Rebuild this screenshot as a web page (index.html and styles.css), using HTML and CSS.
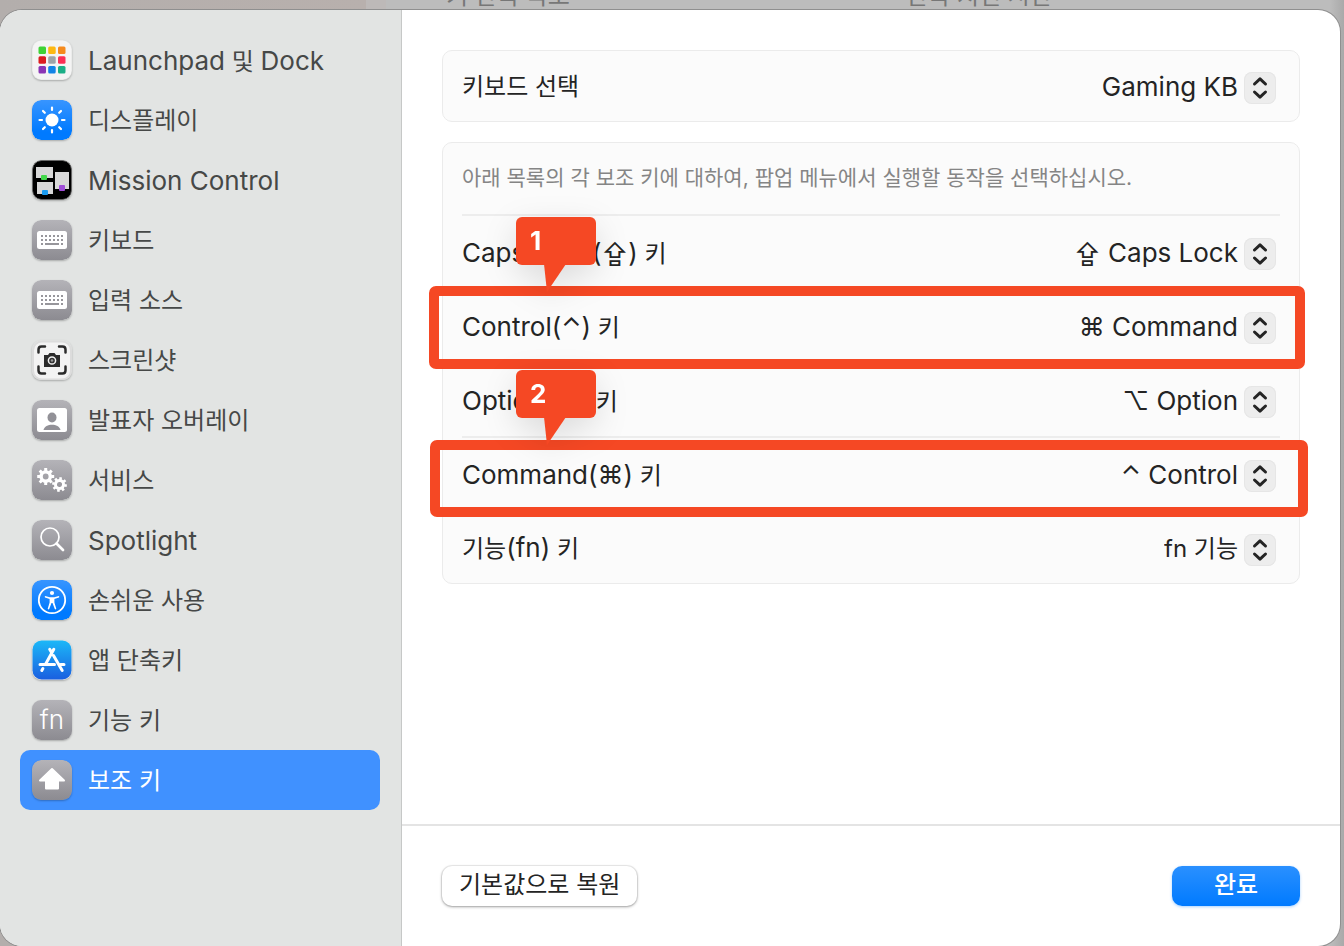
FILE: index.html
```html
<!DOCTYPE html>
<html lang="ko">
<head>
<meta charset="utf-8">
<title>보조 키</title>
<link rel="stylesheet" href="styles.css">
</head>
<body>
<svg class="defs" aria-hidden="true">
  <defs>
    <linearGradient id="gray" x1="0" y1="0" x2="0" y2="1"><stop offset="0" stop-color="#b4b3b8"/><stop offset="1" stop-color="#8c8b91"/></linearGradient>
    <linearGradient id="blue" x1="0" y1="0" x2="0" y2="1"><stop offset="0" stop-color="#3895ff"/><stop offset="0.8" stop-color="#007aff"/></linearGradient>
    <linearGradient id="store" x1="0" y1="0" x2="0" y2="1"><stop offset="0" stop-color="#1cb8f8"/><stop offset="1" stop-color="#1a5fe0"/></linearGradient>
    <g id="keys">
      <rect width="40" height="40" rx="9" fill="url(#gray)"/>
      <rect x="5" y="11" width="30" height="18" rx="2.5" fill="#fff"/>
      <g stroke="#97969b" stroke-width="2" fill="none">
        <path d="M9 16h22M9 20h22" stroke-dasharray="2 2"/>
        <path d="M9 24h2M13 24h14M29 24h2"/>
      </g>
    </g>
    <g id="gear">
      <circle r="4.6" fill="none" stroke="#fff" stroke-width="3.4"/>
      <g stroke="#fff" stroke-width="3"><path d="M0-8.500v3M0 5.500v3M-8.500 0h3M5.500 0h3M-6-6l2.100 2.100M3.900 3.900L6 6M-6 6l2.100-2.100M3.900-3.900L6-6"/></g>
    </g>
    <g id="updown">
      <path d="M10.500 12L16 6.800l5.500 5.200M10.500 20L16 25.200l5.500-5.200" fill="none" stroke="#242424" stroke-width="3" stroke-linecap="round" stroke-linejoin="round"/>
    </g>
  </defs>
</svg>
<div class="backdrop" aria-hidden="true"><span class="behind">키 반복 속도</span><span>반복 지연 시간</span></div>
<div class="dialog">
  <nav class="sidebar">
    <a class="item" href="#"><svg class="icon" viewBox="0 0 40 40"><rect x="0.500" y="0.500" width="39" height="39" rx="9" fill="#f4f4f4"/>
      <rect x="6.500" y="6.500" width="7.500" height="7.500" rx="1.500" fill="#3fd336"/><rect x="16.200" y="6.500" width="7.500" height="7.500" rx="1.500" fill="#fdb813"/><rect x="26" y="6.500" width="7.500" height="7.500" rx="1.500" fill="#f58a1d"/>
      <rect x="6.500" y="16.200" width="7.500" height="7.500" rx="1.500" fill="#dc1c1f"/><rect x="16.200" y="16.200" width="7.500" height="7.500" rx="1.500" fill="#9ea3a8"/><rect x="26" y="16.200" width="7.500" height="7.500" rx="1.500" fill="#fb2e55"/>
      <rect x="6.500" y="26" width="7.500" height="7.500" rx="1.500" fill="#8a35b5"/><rect x="16.200" y="26" width="7.500" height="7.500" rx="1.500" fill="#1384e6"/><rect x="26" y="26" width="7.500" height="7.500" rx="1.500" fill="#1aae86"/></svg><span class="name"><span class="latin">Launchpad</span> 및 <span class="latin">Dock</span></span></a>
    <a class="item" href="#"><svg class="icon" viewBox="0 0 40 40"><rect width="40" height="40" rx="9" fill="url(#blue)"/><circle cx="20" cy="20" r="6.500" fill="#fff"/><path d="M20 7.500v2.500M20 30v2.500M7.500 20H10M30 20h2.500M11 11l1.800 1.800M27.200 27.200L29 29M11 29l1.800-1.800M27.200 12.800L29 11" stroke="#fff" stroke-width="2.200" stroke-linecap="round"/></svg><span class="name">디스플레이</span></a>
    <a class="item" href="#"><svg class="icon" viewBox="0 0 40 40"><rect x="0.500" y="0.500" width="39" height="39" rx="9" fill="#000" stroke="#666"/>
      <rect x="4" y="7" width="17" height="11" fill="#d7d7d7"/><rect x="5" y="22" width="16" height="12" fill="#d7d7d7"/><rect x="23" y="12" width="14" height="17" fill="#d7d7d7"/>
      <rect x="9" y="15" width="6" height="5" rx="1" fill="#43d84b"/><rect x="10" y="30" width="6" height="5" rx="1" fill="#1b9cf2"/><rect x="27" y="25" width="6" height="6" rx="1" fill="#a04ed8"/></svg><span class="name latin">Mission Control</span></a>
    <a class="item" href="#"><svg class="icon" viewBox="0 0 40 40"><use href="#keys"/></svg><span class="name">키보드</span></a>
    <a class="item" href="#"><svg class="icon" viewBox="0 0 40 40"><use href="#keys"/></svg><span class="name">입력 소스</span></a>
    <a class="item" href="#"><svg class="icon" viewBox="0 0 40 40"><rect x="1" y="1.500" width="38" height="38" rx="9" fill="#f3f3f3" stroke="#dcdcdc" stroke-width="2"/>
      <path d="M6.500 12.500V9.500q0-3 3-3H13M27 6.500h3.500q3 0 3 3V12.500M33.500 26.500v4q0 3-3 3H27M13 33.500H9.500q-3 0-3-3V26.500" fill="none" stroke="#2b2b2b" stroke-width="2.500" stroke-linecap="round"/>
      <path d="M12 15h4l1.500-2h5l1.500 2h4v12H12z" fill="#2b2b2b"/><circle cx="20" cy="20.500" r="3.600" fill="#333" stroke="#f3f3f3" stroke-width="1.500"/><circle cx="20" cy="20.500" r="1.300" fill="#999"/></svg><span class="name">스크린샷</span></a>
    <a class="item" href="#"><svg class="icon" viewBox="0 0 40 40"><rect width="40" height="40" rx="9" fill="url(#gray)"/><rect x="5" y="8" width="30" height="24" rx="2.500" fill="#fff"/><ellipse cx="20" cy="17.500" rx="4.500" ry="5" fill="#929197"/><path d="M11.500 30c1.500-7 15.500-7 17 0z" fill="#929197"/></svg><span class="name">발표자 오버레이</span></a>
    <a class="item" href="#"><svg class="icon" viewBox="0 0 40 40"><rect width="40" height="40" rx="9" fill="url(#gray)"/><use href="#gear" transform="translate(13.700 16.500)"/><use href="#gear" transform="translate(27.500 24.500) rotate(10) scale(.87)"/></svg><span class="name">서비스</span></a>
    <a class="item" href="#"><svg class="icon" viewBox="0 0 40 40"><rect width="40" height="40" rx="9" fill="url(#gray)"/><circle cx="18" cy="17" r="9" fill="none" stroke="#fff" stroke-width="1.700"/><path d="M24.500 23.500l6.500 6.500" stroke="#fff" stroke-width="2.700" stroke-linecap="round"/></svg><span class="name latin">Spotlight</span></a>
    <a class="item" href="#"><svg class="icon" viewBox="0 0 40 40"><rect width="40" height="40" rx="9" fill="url(#blue)"/><circle cx="20" cy="20" r="13.200" fill="none" stroke="#fff" stroke-width="1.800"/><circle cx="20" cy="13" r="2.100" fill="#fff"/><path d="M13.200 16l4.600 1.200h4.400l4.600-1.200q1 .6.200 1.400l-4.600 1.600v3.500l1.900 6.300q-.7 1.200-1.500.2L20.500 23h-1l-2.300 6q-.8 1-1.500-.2l1.900-6.300V19L13 17.400q-.8-.8.200-1.400z" fill="#fff"/></svg><span class="name">손쉬운 사용</span></a>
    <a class="item" href="#"><svg class="icon" viewBox="0 0 40 40"><rect x="0.500" y="0.500" width="39" height="39" rx="9" fill="url(#store)"/><path d="M21.800 9.200L13.400 24.500M10.900 28.500l-1.100 2M17.700 9.200l2 3.500M21.500 15.500l8.700 15M8 24.500h14.500M28.500 24.500H32" stroke="#fff" stroke-width="3" stroke-linecap="round" fill="none"/></svg><span class="name">앱 단축키</span></a>
    <a class="item" href="#"><span class="icon fn" aria-hidden="true">fn</span><span class="name">기능 키</span></a>
    <a class="item selected" href="#" aria-current="page"><svg class="icon" viewBox="0 0 40 40"><rect width="40" height="40" rx="9" fill="url(#gray)"/><path d="M20 9L32 20.500h-6V28.500h-12V20.500H8z" fill="#fff" stroke="#fff" stroke-width="2" stroke-linejoin="round"/></svg><span class="name">보조 키</span></a>
  </nav>
  <main class="content">
    <div class="panel">
      <section class="card">
        <div class="row"><label for="kb">키보드 선택</label><span class="picker"><select class="latin" id="kb"><option>Gaming KB</option></select><svg class="stepper" viewBox="0 0 32 32"><use href="#updown"/></svg></span></div>
      </section>
      <section class="card">
        <p class="hint">아래 목록의 각 보조 키에 대하여, 팝업 메뉴에서 실행할 동작을 선택하십시오.</p>
        <div class="row"><label for="caps"><span class="latin">Caps Lock(⇪)</span> 키</label><span class="picker"><select class="latin" id="caps"><option>⇪ Caps Lock</option></select><svg class="stepper" viewBox="0 0 32 32"><use href="#updown"/></svg></span></div>
        <div class="row"><label for="ctrl"><span class="latin">Control(⌃)</span> 키</label><span class="picker"><select class="latin" id="ctrl"><option>⌘ Command</option></select><svg class="stepper" viewBox="0 0 32 32"><use href="#updown"/></svg></span>
          <div class="mark mark-one"><div class="bubble">1<svg class="tail" viewBox="0 0 22 28"><path d="M0 0h22L3 28z" fill="#f54824"/></svg></div></div></div>
        <div class="row"><label for="opt"><span class="latin">Option(⌥)</span> 키</label><span class="picker"><select class="latin" id="opt"><option>⌥ Option</option></select><svg class="stepper" viewBox="0 0 32 32"><use href="#updown"/></svg></span></div>
        <div class="row"><label for="cmd"><span class="latin">Command(⌘)</span> 키</label><span class="picker"><select class="latin" id="cmd"><option>⌃ Control</option></select><svg class="stepper" viewBox="0 0 32 32"><use href="#updown"/></svg></span>
          <div class="mark mark-two"><div class="bubble">2<svg class="tail" viewBox="0 0 22 28"><path d="M0 0h22L3 28z" fill="#f54824"/></svg></div></div></div>
        <div class="row"><label for="fn">기능<span class="latin">(fn)</span> 키</label><span class="picker"><select id="fn"><option>fn 기능</option></select><svg class="stepper" viewBox="0 0 32 32"><use href="#updown"/></svg></span></div>
      </section>
    </div>
    <footer class="footer"><button class="button" type="button">기본값으로 복원</button><button class="button primary" type="button">완료</button></footer>
  </main>
</div>
</body>
</html>
```
FILE: styles.css
```css
* { box-sizing: border-box; }
body {
  margin: 0;
  min-height: 100vh;
  display: flex;
  flex-direction: column;
  background: linear-gradient(90deg, #b3aeac 0, #b8b0ad 366px, #bdb9b8 366px, #bdb9b8 386px, #bcbcbc 386px, #bcbcbc 1330px, #a9a9a9 100%);
  font-family: Inter, "Noto Sans CJK KR", "DejaVu Sans", sans-serif;
  font-size: 24px;
  line-height: 32px;
  color: #242424;
}
.latin { font-size: 26px; }
.defs { display: block; width: 0; height: 0; }
.backdrop {
  height: 10px;
  padding-left: 446px;
  display: flex;
  align-items: flex-end;
  overflow: hidden;
  color: #777;
}
.backdrop span { margin-bottom: -2px; }
.behind { width: 460px; }
.dialog {
  flex: 1;
  display: flex;
  margin-right: 4px;
  border-radius: 22px;
  overflow: hidden;
  background: #fff;
  box-shadow: 0 0 0 1px #8f8f8f;
}
.sidebar {
  flex: none;
  width: 402px;
  padding: 20px 21px 20px 20px;
  background: #e2e4e3;
  border-right: 1px solid #c6c8c7;
}
.item {
  display: flex;
  align-items: center;
  gap: 16px;
  height: 60px;
  padding: 0 12px;
  border-radius: 10px;
  color: #464847;
  text-decoration: none;
}
.item.selected { background: #4091ff; color: #fff; }
.name { padding-top: 2px; }
.icon {
  flex: none;
  width: 40px;
  height: 40px;
  border-radius: 9px;
  box-shadow: 0 1px 2px rgba(0, 0, 0, .25);
}
.fn {
  background: linear-gradient(#b4b3b8, #8c8b91);
  color: #fff;
  text-align: center;
  line-height: 40px;
  font-size: 26px;
  font-weight: 300;
}
.content { flex: 1; display: flex; flex-direction: column; }
.panel {
  flex: 1;
  display: flex;
  flex-direction: column;
  gap: 20px;
  padding: 40px;
}
.card {
  padding: 0 19px;
  background: #fbfbfb;
  border: 1px solid #ebebeb;
  border-radius: 10px;
}
.row {
  position: relative;
  display: flex;
  align-items: center;
  justify-content: space-between;
  height: 74px;
  padding: 4px 4px 0 0;
}
.row:last-child { height: 73px; }
.row:only-child { height: 70px; }
.hint + .row, .row + .row { border-top: 2px solid #ededed; }
.hint { margin: 0; height: 71px; line-height: 70px; font-size: 21px; color: #858585; }
.picker { display: grid; align-items: center; justify-items: end; }
.picker > * { grid-area: 1 / 1; }
select {
  appearance: none;
  border: 0;
  background: none;
  padding: 0 38px 2px 0;
  font-family: inherit;
  font-size: 24px;
  line-height: 32px;
  color: inherit;
  text-align: right;
}
select.latin { font-size: 26px; }
label { padding-bottom: 2px; }
.stepper {
  width: 32px;
  height: 32px;
  border-radius: 8px;
  background: #ededed;
  box-shadow: inset 0 0 0 1px #e6e6e6;
  pointer-events: none;
}
.mark {
  position: absolute;
  z-index: 1;
  border: 10px solid #f54824;
  border-radius: 7px;
  pointer-events: none;
}
.mark-one { inset: -4px -25px -7px -33px; }
.mark-two { inset: 2px -28px -7px -32px; }
.bubble {
  position: absolute;
  left: 77px;
  top: -79px;
  width: 80px;
  height: 48px;
  padding-left: 14px;
  border-radius: 6px;
  background: #f54824;
  color: #fff;
  font-weight: 700;
  font-size: 26px;
  line-height: 48px;
  filter: drop-shadow(0 10px 16px rgba(0, 0, 0, .12));
}
.mark-two .bubble { left: 76px; top: -80px; }
.tail { position: absolute; left: 28px; top: 47px; width: 22px; height: 28px; }
.footer {
  display: flex;
  justify-content: space-between;
  align-items: center;
  height: 122px;
  padding: 0 40px;
  border-top: 2px solid #e4e4e4;
}
.button {
  height: 40px;
  padding: 0 17px 2px;
  border: 0;
  border-radius: 10px;
  background: #fff;
  box-shadow: 0 0 0 1px rgba(0, 0, 0, .06), 0 1px 3px rgba(0, 0, 0, .35);
  font: inherit;
  color: inherit;
}
.primary {
  min-width: 128px;
  background: linear-gradient(#2a90ff, #007aff);
  box-shadow: 0 1px 3px rgba(0, 122, 255, .35);
  color: #fff;
  font-weight: 500;
}
```
